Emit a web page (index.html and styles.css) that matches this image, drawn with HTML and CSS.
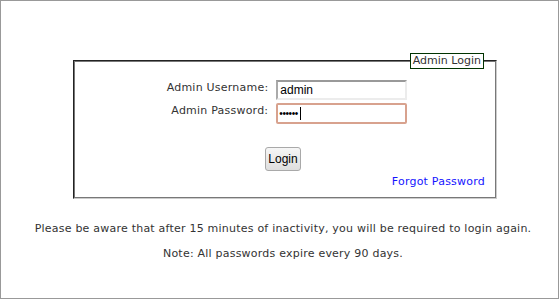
FILE: index.html
```html
<!DOCTYPE html>
<html>
<head>
<meta charset="utf-8">
<link rel="stylesheet" href="styles.css">
</head>
<body>
<div class="page">
  <fieldset class="login">
    <legend class="login-legend">Admin Login</legend>
    <div class="fields">
      <label class="field-label" for="user">Admin Username:</label>
      <input class="field-input" id="user" type="text" value="admin">
      <label class="field-label" for="pass">Admin Password:</label>
      <div class="field-input field-focus" id="pass"><span class="dots">&#8226;&#8226;&#8226;&#8226;&#8226;&#8226;</span><span class="caret"></span></div>
    </div>
    <div class="actions">
      <button class="login-btn" type="button">Login</button>
    </div>
    <div class="forgot-row">
      <a class="forgot" href="#">Forgot Password</a>
    </div>
  </fieldset>
  <p class="note">Please be aware that after 15 minutes of inactivity, you will be required to login again.</p>
  <p class="note">Note: All passwords expire every 90 days.</p>
</div>
</body>
</html>
```
FILE: styles.css
```css
html, body {
  margin: 0;
  padding: 0;
  background: #fff;
}
.page {
  box-sizing: border-box;
  width: 559px;
  height: 299px;
  border: 1px solid #999;
  padding-top: 52px;
  font-family: "DejaVu Sans", Verdana, sans-serif;
  font-size: 11px;
  letter-spacing: 0.22px;
  color: #333;
}
.login {
  box-sizing: border-box;
  width: 424px;
  margin: 0 0 0 72px;
  border: 2px groove #ddd;
  border-color: #777 #ccc #ccc #777;
  padding: 10px 10px 9px 10px;
}
.login-legend {
  margin-left: auto;
  margin-right: 1px;
  padding: 0 2px;
  border: 1px solid #003300;
  line-height: 14px;
  color: #333;
  letter-spacing: 0;
  background: #fff;
}
.fields {
  display: grid;
  grid-template-columns: auto 131px;
  column-gap: 8px;
  row-gap: 3px;
  justify-content: center;
  align-items: center;
  margin-left: 4px;
  margin-top: 1px;
}
.field-label {
  text-align: right;
  align-self: start;
  padding-top: 1px;
}
.field-input {
  box-sizing: border-box;
  width: 131px;
  height: 20px;
  margin: 0;
  padding: 0 2px;
  font-family: "Liberation Sans", Arial, sans-serif;
  font-size: 12px;
  letter-spacing: 0;
  color: #000;
  border: 2px solid #ececec;
  border-top-color: #999;
  border-left-color: #aaa;
  background: #fff;
  outline: none;
}
.field-focus {
  display: flex;
  align-items: center;
  border: 2px solid #d8a28e;
  border-radius: 2px;
  height: 21px;
  padding-left: 1px;
}
.dots {
  font-size: 10px;
  letter-spacing: -0.4px;
  line-height: 1;
}
.caret {
  display: inline-block;
  width: 1px;
  height: 13px;
  margin-left: 2px;
  background: #000;
}
.actions {
  display: flex;
  justify-content: center;
  margin-top: 23px;
  padding-right: 4px;
}
.login-btn {
  box-sizing: border-box;
  width: 36px;
  height: 24px;
  padding: 0;
  font-family: "Liberation Sans", Arial, sans-serif;
  font-size: 12px;
  color: #000;
  border: 1px solid #a9a9a9;
  border-radius: 3px;
  background: linear-gradient(#f6f6f6, #dedede);
}
.forgot-row {
  display: flex;
  justify-content: flex-end;
  margin-top: 4px;
}
.forgot {
  color: #1414ff;
  text-decoration: none;
  font-size: 11px;
}
.note {
  margin: 0;
  padding-left: 7px;
  text-align: center;
  white-space: nowrap;
}
.note:first-of-type {
  margin-top: 23px;
}
.note + .note {
  margin-top: 12px;
}
```
